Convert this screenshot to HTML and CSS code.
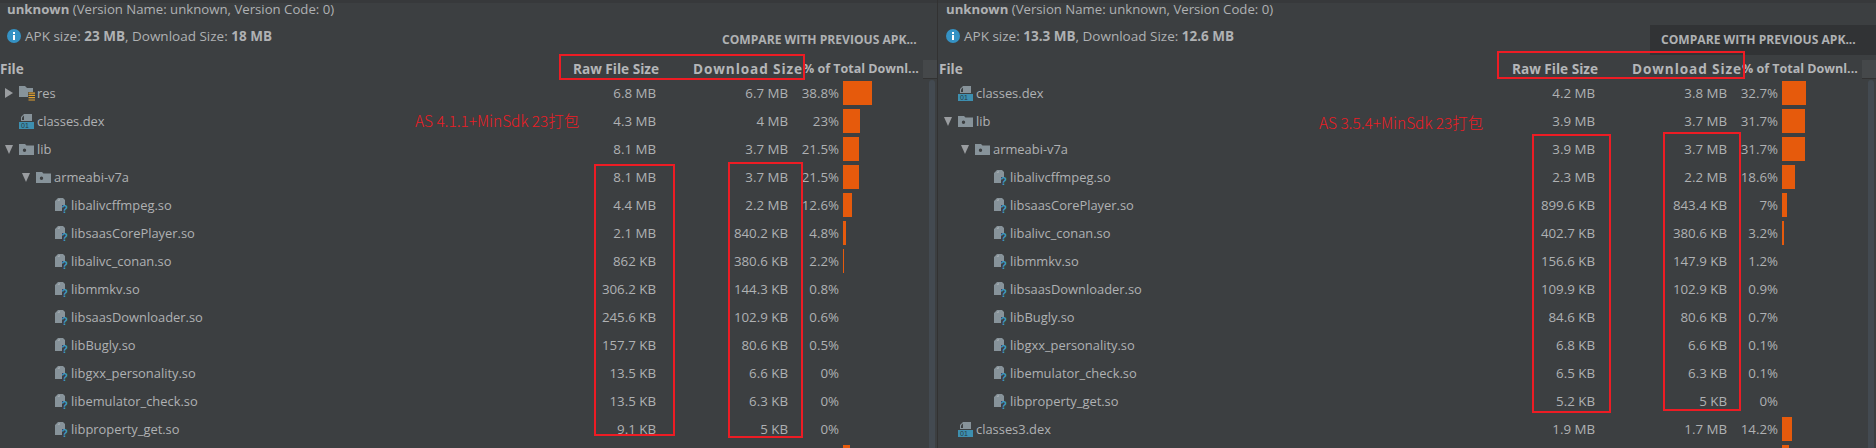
FILE: index.html
```html
<!DOCTYPE html>
<html>
<head>
	<title>APK Analyzer</title>
	<meta name="viewport" content="width=device-width, initial-scale=1.0">
	<link rel="stylesheet" href="styles.css">
</head>
<body>
	<svg class="defs" aria-hidden="true">
		<symbol id="ico-res" viewBox="0 0 16 15">
			<path fill="#87939a" d="M0 0h6l2 2h6v4H9v5H0z"/>
			<path fill="#e0a030" d="M9.500 6.500H16v1.200H9.500zM9.500 8.800H16V10H9.500zM9.500 11.100H16v1.200H9.500zM9.500 13.400H16v1.200H9.500z"/>
		</symbol>
		<symbol id="ico-dir" viewBox="0 0 15 11">
			<path fill="#87939a" fill-rule="evenodd" d="M0 0h6l1.500 1.500H15V11H0zM5.500 4.500a1.700 1.700 0 1 0 0 3.400 1.700 1.700 0 0 0 0-3.400z"/>
		</symbol>
		<symbol id="ico-dex" viewBox="0 0 15 15">
			<path fill="#87939a" d="M5 0h8v7H2V3z"/>
			<path fill="#3c3f41" d="M3 6V3.500L5 1.500V6z"/>
			<rect y="8" width="15" height="7" fill="#3d8fb0"/>
		</symbol>
		<symbol id="ico-so" viewBox="0 0 14 20">
			<path fill="#87939a" d="M3 3h5l2 2v5H7v6H0V6z"/>
			<path fill="#b0b5b8" d="M2.500 5.800 4.700 3.700v2.100z"/>
		</symbol>
	</svg>

	<div class="desk">
		<section class="panel">
			<div class="topline"></div>
			<div class="title"><b>unknown</b> (Version Name: unknown, Version Code: 0)</div>
			<div class="summary">
				<div class="apk">
					<svg class="info" viewBox="0 0 14 14"><circle cx="7" cy="7" r="7" fill="#3592c4"/><rect x="6" y="6" width="2" height="5" fill="#fff"/><rect x="6" y="3" width="2" height="2" fill="#fff"/></svg>
					<span>APK size: <b>23 MB</b>, Download Size: <b>18 MB</b></span>
				</div>
				<div class="compare">COMPARE WITH PREVIOUS APK...</div>
			</div>
			<div class="head">
				<span>File</span>
				<span class="h-r">Raw File Size</span>
				<span class="h-r h-dl">Download Size</span>
				<span class="h-pct">% of Total Downl...</span>
				<i class="corner"></i>
			</div>
			<div class="body">
				<div class="rows">
					<div class="row"><div class="name lv0"><i class="arrow right"></i><svg class="ico ico-16"><use href="#ico-res"/></svg>res</div><span class="num">6.8 MB</span><span class="num">6.7 MB</span><span class="num">38.8%</span><div class="bar-cell"><div class="bar" style="width:29px"></div></div></div>
					<div class="row"><div class="name lv0"><i class="arrow none"></i><svg class="ico ico-dex" viewBox="0 0 15 15"><use href="#ico-dex"/><text x="2" y="14" class="dex-txt">01</text></svg>classes.dex</div><span class="num">4.3 MB</span><span class="num">4 MB</span><span class="num">23%</span><div class="bar-cell"><div class="bar" style="width:17px"></div></div></div>
					<div class="row"><div class="name lv0"><i class="arrow down"></i><svg class="ico ico-dir"><use href="#ico-dir"/></svg>lib</div><span class="num">8.1 MB</span><span class="num">3.7 MB</span><span class="num">21.5%</span><div class="bar-cell"><div class="bar" style="width:16px"></div></div></div>
					<div class="row"><div class="name lv1"><i class="arrow down"></i><svg class="ico ico-dir"><use href="#ico-dir"/></svg>armeabi-v7a</div><span class="num">8.1 MB</span><span class="num">3.7 MB</span><span class="num">21.5%</span><div class="bar-cell"><div class="bar" style="width:16px"></div></div></div>
					<div class="row"><div class="name lv2"><i class="arrow none"></i><svg class="ico ico-so" viewBox="0 0 14 20"><use href="#ico-so"/><text x="6.500" y="17.500" class="so-txt">?</text></svg>libalivcffmpeg.so</div><span class="num">4.4 MB</span><span class="num">2.2 MB</span><span class="num">12.6%</span><div class="bar-cell"><div class="bar" style="width:9px"></div></div></div>
					<div class="row"><div class="name lv2"><i class="arrow none"></i><svg class="ico ico-so" viewBox="0 0 14 20"><use href="#ico-so"/><text x="6.500" y="17.500" class="so-txt">?</text></svg>libsaasCorePlayer.so</div><span class="num">2.1 MB</span><span class="num">840.2 KB</span><span class="num">4.8%</span><div class="bar-cell"><div class="bar" style="width:3px"></div></div></div>
					<div class="row"><div class="name lv2"><i class="arrow none"></i><svg class="ico ico-so" viewBox="0 0 14 20"><use href="#ico-so"/><text x="6.500" y="17.500" class="so-txt">?</text></svg>libalivc_conan.so</div><span class="num">862 KB</span><span class="num">380.6 KB</span><span class="num">2.2%</span><div class="bar-cell"><div class="bar" style="width:1px"></div></div></div>
					<div class="row"><div class="name lv2"><i class="arrow none"></i><svg class="ico ico-so" viewBox="0 0 14 20"><use href="#ico-so"/><text x="6.500" y="17.500" class="so-txt">?</text></svg>libmmkv.so</div><span class="num">306.2 KB</span><span class="num">144.3 KB</span><span class="num">0.8%</span><div class="bar-cell"></div></div>
					<div class="row"><div class="name lv2"><i class="arrow none"></i><svg class="ico ico-so" viewBox="0 0 14 20"><use href="#ico-so"/><text x="6.500" y="17.500" class="so-txt">?</text></svg>libsaasDownloader.so</div><span class="num">245.6 KB</span><span class="num">102.9 KB</span><span class="num">0.6%</span><div class="bar-cell"></div></div>
					<div class="row"><div class="name lv2"><i class="arrow none"></i><svg class="ico ico-so" viewBox="0 0 14 20"><use href="#ico-so"/><text x="6.500" y="17.500" class="so-txt">?</text></svg>libBugly.so</div><span class="num">157.7 KB</span><span class="num">80.6 KB</span><span class="num">0.5%</span><div class="bar-cell"></div></div>
					<div class="row"><div class="name lv2"><i class="arrow none"></i><svg class="ico ico-so" viewBox="0 0 14 20"><use href="#ico-so"/><text x="6.500" y="17.500" class="so-txt">?</text></svg>libgxx_personality.so</div><span class="num">13.5 KB</span><span class="num">6.6 KB</span><span class="num">0%</span><div class="bar-cell"></div></div>
					<div class="row"><div class="name lv2"><i class="arrow none"></i><svg class="ico ico-so" viewBox="0 0 14 20"><use href="#ico-so"/><text x="6.500" y="17.500" class="so-txt">?</text></svg>libemulator_check.so</div><span class="num">13.5 KB</span><span class="num">6.3 KB</span><span class="num">0%</span><div class="bar-cell"></div></div>
					<div class="row"><div class="name lv2"><i class="arrow none"></i><svg class="ico ico-so" viewBox="0 0 14 20"><use href="#ico-so"/><text x="6.500" y="17.500" class="so-txt">?</text></svg>libproperty_get.so</div><span class="num">9.1 KB</span><span class="num">5 KB</span><span class="num">0%</span><div class="bar-cell"></div></div>
					<div class="row"><div class="name lv0"></div><span class="num"></span><span class="num"></span><span class="num"></span><div class="bar-cell"><div class="bar" style="width:7px"></div></div></div>
				</div>
				<div class="track"></div>
			</div>
			<div class="note note-a">AS 4.1.1+MinSdk 23打包</div>
			<div class="mark mark-a1"></div>
			<div class="mark mark-a2"></div>
			<div class="mark mark-a3"></div>
		</section>

		<section class="panel panel-last">
			<div class="topline"></div>
			<div class="title"><b>unknown</b> (Version Name: unknown, Version Code: 0)</div>
			<div class="summary">
				<div class="apk">
					<svg class="info" viewBox="0 0 14 14"><circle cx="7" cy="7" r="7" fill="#3592c4"/><rect x="6" y="6" width="2" height="5" fill="#fff"/><rect x="6" y="3" width="2" height="2" fill="#fff"/></svg>
					<span>APK size: <b>13.3 MB</b>, Download Size: <b>12.6 MB</b></span>
				</div>
				<div class="compare compare-hover">COMPARE WITH PREVIOUS APK...</div>
			</div>
			<div class="head">
				<span>File</span>
				<span class="h-r">Raw File Size</span>
				<span class="h-r h-dl">Download Size</span>
				<span class="h-pct">% of Total Downl...</span>
				<i class="corner"></i>
			</div>
			<div class="body">
				<div class="rows">
					<div class="row"><div class="name lv0"><i class="arrow none"></i><svg class="ico ico-dex" viewBox="0 0 15 15"><use href="#ico-dex"/><text x="2" y="14" class="dex-txt">01</text></svg>classes.dex</div><span class="num">4.2 MB</span><span class="num">3.8 MB</span><span class="num">32.7%</span><div class="bar-cell"><div class="bar" style="width:24px"></div></div></div>
					<div class="row"><div class="name lv0"><i class="arrow down"></i><svg class="ico ico-dir"><use href="#ico-dir"/></svg>lib</div><span class="num">3.9 MB</span><span class="num">3.7 MB</span><span class="num">31.7%</span><div class="bar-cell"><div class="bar" style="width:23px"></div></div></div>
					<div class="row"><div class="name lv1"><i class="arrow down"></i><svg class="ico ico-dir"><use href="#ico-dir"/></svg>armeabi-v7a</div><span class="num">3.9 MB</span><span class="num">3.7 MB</span><span class="num">31.7%</span><div class="bar-cell"><div class="bar" style="width:23px"></div></div></div>
					<div class="row"><div class="name lv2"><i class="arrow none"></i><svg class="ico ico-so" viewBox="0 0 14 20"><use href="#ico-so"/><text x="6.500" y="17.500" class="so-txt">?</text></svg>libalivcffmpeg.so</div><span class="num">2.3 MB</span><span class="num">2.2 MB</span><span class="num">18.6%</span><div class="bar-cell"><div class="bar" style="width:13px"></div></div></div>
					<div class="row"><div class="name lv2"><i class="arrow none"></i><svg class="ico ico-so" viewBox="0 0 14 20"><use href="#ico-so"/><text x="6.500" y="17.500" class="so-txt">?</text></svg>libsaasCorePlayer.so</div><span class="num">899.6 KB</span><span class="num">843.4 KB</span><span class="num">7%</span><div class="bar-cell"><div class="bar" style="width:5px"></div></div></div>
					<div class="row"><div class="name lv2"><i class="arrow none"></i><svg class="ico ico-so" viewBox="0 0 14 20"><use href="#ico-so"/><text x="6.500" y="17.500" class="so-txt">?</text></svg>libalivc_conan.so</div><span class="num">402.7 KB</span><span class="num">380.6 KB</span><span class="num">3.2%</span><div class="bar-cell"><div class="bar" style="width:2px"></div></div></div>
					<div class="row"><div class="name lv2"><i class="arrow none"></i><svg class="ico ico-so" viewBox="0 0 14 20"><use href="#ico-so"/><text x="6.500" y="17.500" class="so-txt">?</text></svg>libmmkv.so</div><span class="num">156.6 KB</span><span class="num">147.9 KB</span><span class="num">1.2%</span><div class="bar-cell"></div></div>
					<div class="row"><div class="name lv2"><i class="arrow none"></i><svg class="ico ico-so" viewBox="0 0 14 20"><use href="#ico-so"/><text x="6.500" y="17.500" class="so-txt">?</text></svg>libsaasDownloader.so</div><span class="num">109.9 KB</span><span class="num">102.9 KB</span><span class="num">0.9%</span><div class="bar-cell"></div></div>
					<div class="row"><div class="name lv2"><i class="arrow none"></i><svg class="ico ico-so" viewBox="0 0 14 20"><use href="#ico-so"/><text x="6.500" y="17.500" class="so-txt">?</text></svg>libBugly.so</div><span class="num">84.6 KB</span><span class="num">80.6 KB</span><span class="num">0.7%</span><div class="bar-cell"></div></div>
					<div class="row"><div class="name lv2"><i class="arrow none"></i><svg class="ico ico-so" viewBox="0 0 14 20"><use href="#ico-so"/><text x="6.500" y="17.500" class="so-txt">?</text></svg>libgxx_personality.so</div><span class="num">6.8 KB</span><span class="num">6.6 KB</span><span class="num">0.1%</span><div class="bar-cell"></div></div>
					<div class="row"><div class="name lv2"><i class="arrow none"></i><svg class="ico ico-so" viewBox="0 0 14 20"><use href="#ico-so"/><text x="6.500" y="17.500" class="so-txt">?</text></svg>libemulator_check.so</div><span class="num">6.5 KB</span><span class="num">6.3 KB</span><span class="num">0.1%</span><div class="bar-cell"></div></div>
					<div class="row"><div class="name lv2"><i class="arrow none"></i><svg class="ico ico-so" viewBox="0 0 14 20"><use href="#ico-so"/><text x="6.500" y="17.500" class="so-txt">?</text></svg>libproperty_get.so</div><span class="num">5.2 KB</span><span class="num">5 KB</span><span class="num">0%</span><div class="bar-cell"></div></div>
					<div class="row"><div class="name lv0"><i class="arrow none"></i><svg class="ico ico-dex" viewBox="0 0 15 15"><use href="#ico-dex"/><text x="2" y="14" class="dex-txt">01</text></svg>classes3.dex</div><span class="num">1.9 MB</span><span class="num">1.7 MB</span><span class="num">14.2%</span><div class="bar-cell"><div class="bar" style="width:10px"></div></div></div>
					<div class="row"><div class="name lv0"></div><span class="num"></span><span class="num"></span><span class="num"></span><div class="bar-cell"><div class="bar" style="width:7px"></div></div></div>
				</div>
				<div class="track"></div>
			</div>
			<div class="note note-b">AS 3.5.4+MinSdk 23打包</div>
			<div class="mark mark-b1"></div>
			<div class="mark mark-b2"></div>
			<div class="mark mark-b3"></div>
		</section>
	</div>
</body>
</html>
```

FILE: styles.css
```css
html, body {
	margin: 0;
	padding: 0;
	background: #3c3f41;
	height: 448px;
	overflow: hidden;
}

.defs {
	position: absolute;
	width: 0;
	height: 0;
}

.desk {
	display: flex;
	height: 448px;
	overflow: hidden;
	color: #afb1b3;
	font-family: "Open Sans", "Noto Sans CJK SC", sans-serif;
	font-size: 13px;
}

.panel {
	position: relative;
	flex: 0 0 939px;
	height: 448px;
	overflow: hidden;
}

.panel::after {
	content: "";
	position: absolute;
	top: 0;
	bottom: 0;
	left: 937px;
	width: 1px;
	background: #323232;
}

.topline {
	height: 3px;
	background: #37393b;
}

.title {
	height: 22px;
	line-height: 12px;
	padding-left: 7px;
	font-size: 13.2px;
	white-space: nowrap;
}

.title b, .apk b, .head {
	font-weight: 700;
}

.summary {
	display: flex;
	justify-content: space-between;
	height: 30px;
}

.apk {
	display: flex;
	align-items: center;
	gap: 4px;
	padding: 0 0 8px 7px;
	font-size: 13.5px;
	white-space: nowrap;
}

.info {
	width: 14px;
	height: 14px;
}

.compare {
	flex: 0 0 228px;
	box-sizing: border-box;
	padding-left: 11px;
	line-height: 30px;
	font-weight: 700;
	font-size: 12.1px;
	white-space: nowrap;
}

.compare-hover {
	background: #313335;
}

.head {
	position: relative;
	display: grid;
	grid-template-columns: 559px 100px 144px 120px;
	align-items: center;
	box-sizing: border-box;
	height: 25px;
	padding-top: 2px;
	white-space: nowrap;
	font-size: 13.6px;
	color: #b4b6b8;
}

.h-r {
	text-align: right;
}

.h-dl {
	letter-spacing: 0.9px;
}

.h-pct {
	font-size: 12.5px;
}

.corner {
	position: absolute;
	left: 923px;
	top: 5px;
	width: 14px;
	height: 18px;
	background: #45484a;
	border-bottom: 1px solid #323232;
}

.body {
	display: flex;
}

.rows {
	flex: 0 0 929px;
}

.row {
	display: grid;
	grid-template-columns: 540px 116px 132px 51px 90px;
	align-items: center;
	height: 28px;
}

.name {
	display: flex;
	align-items: center;
	padding-bottom: 2px;
	font-size: 12.9px;
	white-space: nowrap;
}

.lv0 {
	padding-left: 5px;
}

.lv1 {
	padding-left: 22px;
}

.lv2 {
	padding-left: 41px;
}

.arrow {
	flex: 0 0 14px;
	height: 10px;
	box-sizing: border-box;
}

.arrow.right {
	border-left: 8px solid #9a9da0;
	border-top: 5px solid transparent;
	border-bottom: 5px solid transparent;
}

.arrow.down {
	position: relative;
}

.arrow.down::before {
	content: "";
	position: absolute;
	left: 0;
	top: 1px;
	border-top: 9px solid #9a9da0;
	border-left: 4.5px solid transparent;
	border-right: 4.5px solid transparent;
}

.ico {
	flex: none;
	margin-right: 3px;
}

.ico-16 {
	width: 16px;
	height: 15px;
	margin-right: 2px;
}

.ico-dir {
	width: 15px;
	height: 11px;
}

.ico-dex {
	width: 15px;
	height: 15px;
}

.ico-so {
	width: 14px;
	height: 20px;
	margin-right: 2px;
}

.dex-txt {
	font-family: "Liberation Sans", sans-serif;
	font-size: 7px;
	fill: #2b3a42;
}

.so-txt {
	font-family: "Liberation Sans", sans-serif;
	font-size: 10.5px;
	font-weight: 700;
	fill: #3d9cc4;
}

.num {
	padding-bottom: 2px;
	font-size: 13.3px;
	text-align: right;
	white-space: nowrap;
}

.bar-cell {
	height: 24px;
	padding-left: 4px;
	margin-top: -2px;
}

.bar {
	height: 24px;
	background: #e65a0c;
}

.track {
	flex: 0 0 6px;
	height: 380px;
	border-radius: 3px 3px 0 0;
	background: #434a51;
}

.note {
	position: absolute;
	color: #ed1c24;
	font-family: "Noto Sans CJK SC", sans-serif;
	font-size: 15.4px;
	font-weight: 300;
	line-height: 18px;
	white-space: nowrap;
}

.note-a {
	left: 415px;
	top: 111px;
}

.note-b {
	left: 380px;
	top: 113px;
}

.mark {
	position: absolute;
	box-sizing: border-box;
	border: 2px solid #ed1c24;
}

.mark-a1 {
	left: 559px;
	top: 54px;
	width: 246px;
	height: 26px;
}

.mark-a2 {
	left: 594px;
	top: 164px;
	width: 81px;
	height: 272px;
}

.mark-a3 {
	left: 728px;
	top: 162px;
	width: 75px;
	height: 276px;
}

.mark-b1 {
	left: 558px;
	top: 51px;
	width: 248px;
	height: 28px;
}

.mark-b2 {
	left: 593px;
	top: 134px;
	width: 79px;
	height: 279px;
}

.mark-b3 {
	left: 724px;
	top: 132px;
	width: 78px;
	height: 279px;
}
```
